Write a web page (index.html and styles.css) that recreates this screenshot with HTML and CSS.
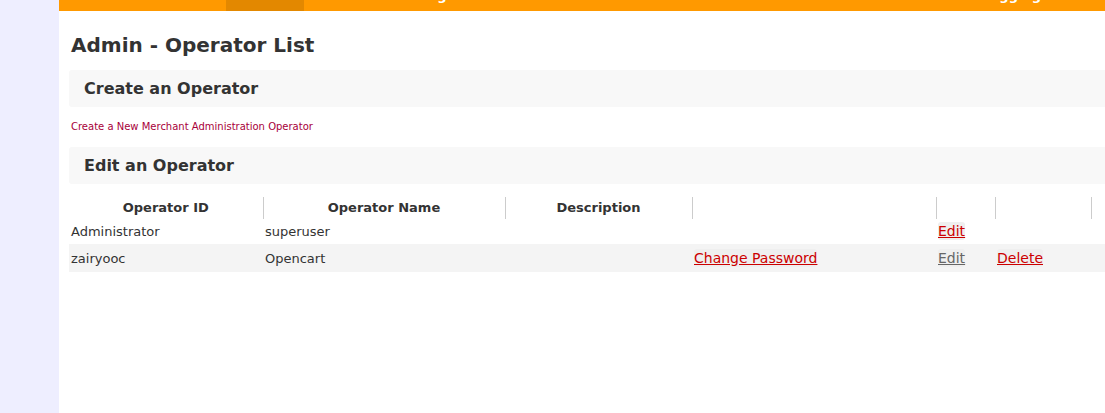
FILE: index.html
```html
<!DOCTYPE html>
<html>
<head>
<meta charset="utf-8">
<link rel="stylesheet" href="styles.css">
</head>
<body>
<div class="page">
  <aside class="sidebar"></aside>
  <main class="main">
    <nav class="topbar">
      <span class="nav-item nav-first"><span class="nav-text">Home</span></span>
      <span class="nav-item nav-active"><span class="nav-text">Admin</span></span>
      <span class="nav-item nav-mid"><span class="nav-text">Settings</span></span>
      <span class="nav-item nav-right"><span class="nav-text">Logging</span></span>
    </nav>
    <div class="content">
      <h1 class="title">Admin - Operator List</h1>
      <h2 class="section">Create an Operator</h2>
      <p class="create"><a class="create-link" href="#">Create a New Merchant Administration Operator</a></p>
      <h2 class="section">Edit an Operator</h2>
      <table class="ops">
        <colgroup>
          <col class="c1"><col class="c2"><col class="c3"><col class="c4"><col class="c5"><col class="c6"><col class="c7">
        </colgroup>
        <thead>
          <tr>
            <th>Operator ID</th>
            <th>Operator Name</th>
            <th>Description</th>
            <th></th>
            <th></th>
            <th></th>
            <th></th>
          </tr>
        </thead>
        <tbody>
          <tr class="first">
            <td>Administrator</td>
            <td>superuser</td>
            <td></td>
            <td></td>
            <td><a class="lnk" href="#">Edit</a></td>
            <td></td>
            <td></td>
          </tr>
          <tr class="alt">
            <td>zairyooc</td>
            <td>Opencart</td>
            <td></td>
            <td><a class="lnk" href="#">Change Password</a></td>
            <td><a class="lnk visited" href="#">Edit</a></td>
            <td><a class="lnk" href="#">Delete</a></td>
            <td></td>
          </tr>
        </tbody>
      </table>
    </div>
  </main>
</div>
</body>
</html>
```

FILE: styles.css
```css
html, body {
  margin: 0;
  padding: 0;
  background: #ffffff;
}
body {
  font-family: "DejaVu Sans", Verdana, sans-serif;
  color: #333333;
  overflow: hidden;
}
.page {
  display: flex;
  min-height: 413px;
  width: 1105px;
  overflow: hidden;
}
.sidebar {
  width: 59px;
  flex: 0 0 59px;
  background: #eeeeff;
}
.main {
  flex: 1;
  min-width: 0;
  overflow: hidden;
}
.topbar {
  height: 11px;
  background: #ff9900;
  display: flex;
  overflow: hidden;
  font-size: 13px;
  font-weight: bold;
  color: #ffffff;
}
.nav-item {
  display: block;
  height: 11px;
  overflow: hidden;
  line-height: 15px;
}
.nav-text {
  display: block;
  margin-top: -12px;
}
.nav-first {
  width: 167px;
  color: transparent;
}
.nav-active {
  width: 78px;
  background: #e38800;
  color: #ffcc80;
  text-align: center;
}
.nav-mid {
  margin-left: 89px;
  color: #ffffff;
}
.nav-right {
  margin-left: auto;
  margin-right: 64px;
  color: #ffffff;
}
.content {
  padding: 21px 0 0 10px;
}
.title {
  margin: 0 0 12px 2px;
  font-size: 20px;
  line-height: 26px;
  font-weight: bold;
  color: #333333;
}
.section {
  margin: 0;
  width: 1100px;
  height: 37px;
  box-sizing: border-box;
  padding: 0 0 0 15px;
  background: #f8f8f8;
  border-radius: 3px;
  font-size: 16px;
  line-height: 37px;
  font-weight: bold;
  color: #333333;
}
.create {
  margin: 12px 0 12px 2px;
  font-size: 10px;
  line-height: 16px;
}
.create-link {
  color: #a8003a;
  text-decoration: none;
}
.ops {
  margin-top: 13px;
  border-collapse: collapse;
  table-layout: fixed;
  width: 1100px;
  font-size: 13px;
}
.c1 { width: 194px; }
.c2 { width: 242px; }
.c3 { width: 187px; }
.c4 { width: 244px; }
.c5 { width: 59px; }
.c6 { width: 96px; }
.c7 { width: 78px; }
.ops th {
  height: 20px;
  padding: 0;
  font-weight: bold;
  color: #333333;
  text-align: center;
  border-right: 1px solid #cccccc;
  line-height: 20px;
}
.ops thead tr {
  height: 22px;
}
.ops td {
  padding: 0 2px;
  line-height: 20px;
  color: #333333;
  text-align: left;
  white-space: nowrap;
}
.ops tr.first td {
  height: 25px;
}
.ops tr.alt td {
  background: #f4f4f4;
  height: 27px;
  padding-top: 1px;
}
.lnk {
  font-size: 14px;
  color: #cc0000;
  text-decoration: underline;
  background: #efefef;
  border-radius: 3px;
  padding: 1px 0;
}
.lnk.visited {
  color: #666666;
}
```
